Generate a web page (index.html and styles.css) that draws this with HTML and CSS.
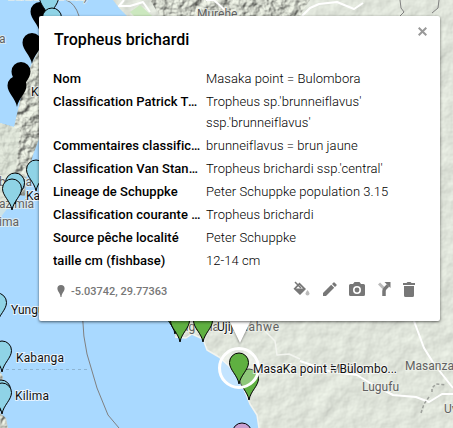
FILE: index.html
```html
<!DOCTYPE html>
<html lang="fr">
<head>
    <meta charset="UTF-8">
    <meta name="viewport" content="width=device-width, initial-scale=1.0">
    <title>Tropheus brichardi</title>
    <link rel="stylesheet" href="styles.css">
</head>
<body>
    <div class="map">
        <svg class="map-canvas" width="453" height="428" viewBox="0 0 453 428">
            <defs>
                <filter id="relief" x="0" y="0" width="100%" height="100%" color-interpolation-filters="sRGB">
                    <feTurbulence type="fractalNoise" baseFrequency="0.05" numOctaves="4" seed="8" result="noise"/>
                    <feDiffuseLighting in="noise" surfaceScale="0.8" diffuseConstant="1.15" lighting-color="#e0e5db" result="light">
                        <feDistantLight azimuth="225" elevation="60"/>
                    </feDiffuseLighting>
                    <feComposite in="light" in2="SourceGraphic" operator="in"/>
                </filter>
                <filter id="mountain" x="0" y="0" width="100%" height="100%" color-interpolation-filters="sRGB">
                    <feTurbulence type="fractalNoise" baseFrequency="0.11" numOctaves="4" seed="3" result="noise"/>
                    <feDiffuseLighting in="noise" surfaceScale="3" diffuseConstant="1.15" lighting-color="#d4d8cd" result="light">
                        <feDistantLight azimuth="225" elevation="58"/>
                    </feDiffuseLighting>
                    <feComposite in="light" in2="SourceGraphic" operator="in"/>
                </filter>
                <path id="pin" d="M0 0C-1.500 -9 -9.500 -14 -9.500 -21.500A9.500 9.500 0 0 1 9.500 -21.500C9.500 -14 1.500 -9 0 0Z"/>
            </defs>

            <!-- lake -->
            <rect width="453" height="428" fill="#a9d9ff"/>

            <!-- land -->
            <g filter="url(#relief)">
                <path d="M113 0L119 8L127 16H220V316H174L175 337L186 338L192 334L203 339L207 350L219 357L229 366L239 378L246 394L250 404L257 415L259 428H453V0Z"/>
            </g>
            <g filter="url(#mountain)">
                <path d="M150 0H310L300 16H160Z"/>
                <path d="M39 50L32 63L24 83L20 101L14 127L0 123V209L9 209L12 194L25 196L26 179L33 155L39 139Z"/>
                <path d="M0 371L3 377L2 384L0 386ZM0 413L6 418L8 428H0Z"/>
            </g>
            <path d="M0 123L14 127L20 130L17 160L10 205L0 218Z" fill="#e0e7da" opacity=".7"/>
            <path d="M130 12L140 5L152 16H134Z" fill="#cce8bf"/>

            <!-- borders and roads -->
            <g fill="none" stroke="#808080" stroke-width="1">
                <path d="M66 0Q75 3 79 16"/>
                <path d="M82.500 316Q83 337 87 354L97 388L108 415L119 428"/>
                <path d="M400 0L401 8L404 12L400 16M439 0L438 8L432 13"/>
                <path d="M6 369.500H89" stroke="#8db4d2" stroke-dasharray="3 3"/>
            </g>
            <g fill="none" stroke="#fff" stroke-width="2" stroke-linejoin="round">
                <path d="M124 0L119 6L130 6L143 2L150 12"/>
                <path d="M206 0L214 0L228 13M302 16L310 8L319 4L337 2L354 9L363 3"/>
                <path d="M414 321L424 348L434 364L453 388"/>
                <path d="M300 361L332 372L357 375L370 383L393 395L416 397L429 402L442 394L453 394"/>
                <path d="M175 337L186 338L192 334L203 339L207 350L219 357L229 366L239 378L246 394L250 404L257 415L259 428M257 319L266 332L275 341L277 355L289 354L300 359" stroke="#f2f4ef" stroke-width="1.500"/>
            </g>
            <path d="M432 392V388L436 384L446 385M429 397L424 404L421 413" fill="none" stroke="#9da09b" stroke-width="1.500" stroke-dasharray="3 2"/>

            <!-- place names -->
            <g class="place">
                <text x="197" y="18">Murehe</text>
                <text x="8" y="0" textLength="80">Baraka (Luberizi)</text>
                <text x="-1" y="43">a</text>
                <text x="-4" y="186">ibanga</text>
                <text x="-1" y="208" textLength="35">azimia</text>
                <text x="-1" y="226">ima</text>
                <text x="178" y="331" textLength="41">Kigoma</text>
                <text x="232" y="331" textLength="47">Ndahwe</text>
                <text x="324" y="373">i Mulilo</text>
                <text x="405" y="370" textLength="49">Masanza</text>
                <text x="362" y="391" textLength="37">Lugufu</text>
                <text x="444" y="413">Uv</text>
            </g>

            <!-- pins -->
            <g fill="#000">
                <use href="#pin" x="40" y="33"/>
                <use href="#pin" x="32" y="64"/>
                <use href="#pin" x="21" y="93"/>
                <use href="#pin" x="17" y="107"/>
            </g>
            <g fill="#8fd3e6" stroke="#000">
                <use href="#pin" x="49" y="19"/>
                <use href="#pin" x="52" y="39"/>
                <use href="#pin" x="36" y="191"/>
                <use href="#pin" x="15" y="204"/>
                <use href="#pin" x="12" y="210"/>
                <use href="#pin" x="-3" y="324"/>
                <use href="#pin" x="2" y="372"/>
                <use href="#pin" x="1" y="411"/>
                <use href="#pin" x="2" y="414"/>
            </g>
            <g fill="#5fb041" stroke="#000">
                <use href="#pin" x="175" y="334"/>
                <use href="#pin" x="180" y="342"/>
                <use href="#pin" x="203" y="342"/>
                <use href="#pin" x="249" y="400"/>
            </g>
            <use href="#pin" x="242" y="454" fill="#c99fd0" stroke="#000"/>

            <!-- selected pin -->
            <circle cx="239" cy="368" r="19.500" fill="#fff" fill-opacity=".3" stroke="#fff" stroke-width="3"/>
            <use href="#pin" x="239" y="384" fill="#5fb041" stroke="#000"/>

            <g class="label">
                <text x="31" y="96">Karamba</text>
                <text x="26" y="200">Kalundo</text>
                <text x="11" y="314">Yungu</text>
                <text x="16" y="362" textLength="48">Kabanga</text>
                <text x="15" y="400" textLength="34">Kilima</text>
                <text x="217" y="331">Ujiji</text>
                <text x="253" y="373" textLength="144">MasaKa point = Bulombo...</text>
            </g>

            <path class="card-tip" d="M228 318L240 343L252 318Z"/>
        </svg>

        <div class="card">
            <button class="close" aria-label="Fermer">
                <svg width="9" height="9" viewBox="0 0 9 9"><path d="M.7.7L8.300 8.300M8.300.7L.7 8.300" stroke="#999" stroke-width="2"/></svg>
            </button>
            <h1>Tropheus brichardi</h1>
            <dl class="fields">
                <dt>Nom</dt>
                <dd>Masaka point = Bulombora</dd>
                <dt>Classification Patrick TAWIL</dt>
                <dd>Tropheus sp.'brunneiflavus'<br>ssp.'brunneiflavus'</dd>
                <dt>Commentaires classification</dt>
                <dd>brunneiflavus = brun jaune</dd>
                <dt>Classification Van Stanbrouck</dt>
                <dd>Tropheus brichardi ssp.'central'</dd>
                <dt>Lineage de Schuppke</dt>
                <dd>Peter Schuppke population 3.15</dd>
                <dt>Classification courante (2015)</dt>
                <dd>Tropheus brichardi</dd>
                <dt>Source pêche localité</dt>
                <dd>Peter Schuppke</dd>
                <dt>taille cm (fishbase)</dt>
                <dd>12-14 cm</dd>
            </dl>
            <div class="card-footer">
                <svg class="coord-icon" width="8" height="12" viewBox="0 0 8 12"><path d="M4 0A3.600 3.600 0 0 0 .4 3.600C.4 6.500 3.300 8 3.500 12H4.500C4.700 8 7.600 6.500 7.600 3.600A3.600 3.600 0 0 0 4 0Z" fill="#777"/></svg>
                <span class="coords">-5.03742, 29.77363</span>
                <div class="actions">
                    <svg width="17" height="16" viewBox="0 0 17 16">
                        <path d="M2 1L8 7" stroke="#777" stroke-width="1.500"/>
                        <path fill-rule="evenodd" d="M6.500 1.500L13 8L7 14L.5 7.700ZM6.500 4L3 7.500H10Z" fill="#777"/>
                        <path d="M14.500 9Q12.500 11.500 12.500 12.500A2 2 0 0 0 16.500 12.500Q16.500 11.500 14.500 9Z" fill="#bbb"/>
                    </svg>
                    <svg width="14" height="14" viewBox="0 0 14 14"><path d="M0 11L8.200 2.800L11.200 5.800L3 14H0ZM9 2L10.500.5Q11 0 11.500.5L13.500 2.500Q14 3 13.500 3.500L12 5Z" fill="#777"/></svg>
                    <svg width="16" height="14" viewBox="0 0 16 14"><path fill-rule="evenodd" d="M5.500 0H10.500L12 2H14.500Q16 2 16 3.500V12.500Q16 14 14.500 14H1.500Q0 14 0 12.500V3.500Q0 2 1.500 2H4ZM8 4A4 4 0 1 0 8 12A4 4 0 1 0 8 4Z" fill="#777"/><circle cx="8" cy="8" r="2.400" fill="#777"/></svg>
                    <svg width="13" height="14" viewBox="0 0 13 14"><path d="M1 1.500L6 6.500" fill="none" stroke="#bbb" stroke-width="3"/><path d="M6 14V9Q6 7 10 3.500" fill="none" stroke="#777" stroke-width="3.500"/><path d="M6.500 0H12.500V6Z" fill="#777"/></svg>
                    <svg width="12" height="15" viewBox="0 0 12 15"><path d="M0 1H3.500L4.500 0H7.500L8.500 1H12V3H0ZM1 4H11V13.500Q11 15 9.500 15H2.500Q1 15 1 13.500Z" fill="#777"/></svg>
                </div>
            </div>
        </div>
    </div>
</body>
</html>
```

FILE: styles.css
```css
body {
    margin: 0;
    font-family: Roboto, Arial, sans-serif;
    color: #000;
}
.map {
    position: relative;
    width: 453px;
    height: 428px;
    overflow: hidden;
}
.map-canvas {
    display: block;
}
.place text {
    font-size: 12px;
    fill: #616161;
    stroke: #eef1ea;
    stroke-width: 2px;
    stroke-opacity: 0.7;
    paint-order: stroke;
}
.label text {
    font-size: 12px;
    fill: #111;
    stroke: #fff;
    stroke-width: 2px;
    stroke-opacity: 0.7;
    paint-order: stroke;
}
.card-tip {
    fill: #fff;
    filter: drop-shadow(0 1px 1px rgba(0, 0, 0, 0.4));
}
/* info window over the map */
.card {
    position: absolute;
    top: 16px;
    left: 39px;
    width: 401px;
    height: 305px;
    padding: 14px 14px 0;
    box-sizing: border-box;
    background: #fff;
    border-radius: 2px;
    box-shadow: 0 1px 3px rgba(0, 0, 0, 0.6);
}
.card h1 {
    margin: 0 0 19px 1px;
    font-size: 16px;
    line-height: 19px;
    font-weight: 500;
    letter-spacing: 0.05px;
}
.close {
    position: absolute;
    top: 11px;
    right: 13px;
    padding: 0;
    border: 0;
    background: none;
    line-height: 0;
}
.fields {
    display: grid;
    grid-template-columns: 150px 1fr;
    column-gap: 3px;
    row-gap: 2px;
    margin: 0;
    font-size: 13px;
    line-height: 21px;
}
.fields dt {
    font-weight: 500;
    letter-spacing: 0.04px;
    overflow: hidden;
    text-overflow: ellipsis;
    white-space: nowrap;
}
.fields dd {
    margin: 0;
    font-weight: 300;
    letter-spacing: 0.06px;
}
.card-footer {
    display: flex;
    align-items: center;
    height: 18px;
    margin-top: 9px;
    padding: 0 11px 0 4px;
}
.coord-icon,
.coords {
    margin-top: 4px;
}
.coords {
    margin-left: 6px;
    font-size: 11px;
    font-weight: 500;
    color: #777;
}
.actions {
    display: flex;
    align-items: center;
    gap: 12.5px;
    margin-left: auto;
}
```
